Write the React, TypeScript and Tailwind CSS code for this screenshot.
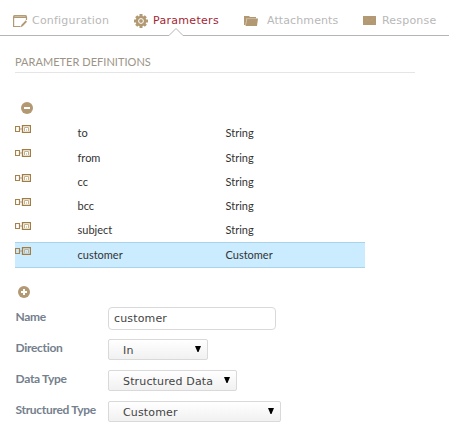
import React from "react";

const verdana = "font-['DejaVu_Sans',sans-serif]";

function ConfigIcon() {
  return (
    <svg width="15" height="13" viewBox="0 0 15 13" fill="none" className="block">
      <path d="M0 1.5Q0 0 1.5 0H12.5Q14 0 14 1.5V3H0Z" fill="#b29973" />
      <path d="M1.5 1.4H12.5" stroke="#d8cbb6" strokeWidth=".8" />
      <path d="M.6 2V11.5H7.5M13.5 2V5" stroke="#b29973" strokeWidth="1.2" />
      <path d="M7.5 12.2L8.5 9.7L12.8 5.3L14 6.7L9.7 11.2Z" fill="#b29973" />
    </svg>
  );
}

function GearIcon() {
  return (
    <svg width="14" height="14" viewBox="-7 -7 14 14" className="block">
      <g fill="#b29973">
        <circle r="5.3" />
        <rect x="-1.5" y="-7" width="3" height="14" />
        <rect x="-7" y="-1.5" width="14" height="3" />
        <rect x="-1.5" y="-6.8" width="3" height="13.6" transform="rotate(45)" />
        <rect x="-1.5" y="-6.8" width="3" height="13.6" transform="rotate(-45)" />
      </g>
      <circle r="2.4" fill="none" stroke="#fff" strokeWidth="1" />
    </svg>
  );
}

function FolderIcon() {
  return (
    <svg width="14" height="10" viewBox="0 0 14 10" className="block">
      <path d="M0 0H5L6 1H12V2.5H2.5L1.5 9H0Z" fill="#b29973" />
      <path d="M3 2.6H14L13 10H1.5Z" fill="#b29973" />
      <path d="M2 8L2.8 2.7H12" fill="none" stroke="#cdbb9f" strokeWidth=".6" />
    </svg>
  );
}

function MailIcon() {
  return (
    <svg width="13" height="9" viewBox="0 0 13 9" className="block">
      <rect width="13" height="9" fill="#b29973" />
      <path d="M.5 .5L6.5 5L12.5 .5M.5 8.5L4.5 4M12.5 8.5L8.5 4" fill="none" stroke="#bfa98a" strokeWidth=".4" />
    </svg>
  );
}

function ParamIcon() {
  return (
    <svg width="16" height="8" viewBox="0 0 16 8" fill="none" className="block">
      <path d="M.5 1.5H4.5V6.5H.5Z" stroke="#a5834d" strokeWidth="1.2" />
      <path d="M5 4H7" stroke="#b79f78" strokeWidth="1.2" />
      <path d="M7.5 .5H15.5V7.5H7.5Z" stroke="#a17d43" strokeWidth="1.3" />
      <path d="M9.5 6V2.5H13.5V6" stroke="#c6b18e" />
      <path d="M11.5 4V6" stroke="#dccfb8" />
    </svg>
  );
}

function RoundButton({ plus = false }: { plus?: boolean }) {
  return (
    <svg width="12" height="12" viewBox="0 0 12 12" className="block">
      <circle cx="6" cy="6" r="6" fill="#b29973" />
      <path d={plus ? "M3 6H9M6 3V9" : "M3 6H9"} stroke="#fff" strokeWidth="2" />
    </svg>
  );
}

const rows = [
  { name: "to", type: "String", cls: "h-[25px] leading-[26px]", icon: "mt-[5px]" },
  { name: "from", type: "String", cls: "h-6 leading-[26px]", icon: "mt-1" },
  { name: "cc", type: "String", cls: "h-6 leading-[26px]", icon: "mt-[5px]" },
  { name: "bcc", type: "String", cls: "h-6 leading-[26px]", icon: "mt-[5px]" },
  { name: "subject", type: "String", cls: "h-[25px] leading-[26px]", icon: "mt-[5px]" },
  { name: "customer", type: "Customer", cls: "h-[26px] bg-[#cbebff] border-y border-[#a9d3e8] leading-6", icon: "mt-1" },
];

function Select({ value, width }: { value: string; width: string }) {
  return (
    <div className={`flex h-[21px] items-center justify-between rounded-[2px] border border-[#d9d9d9] bg-gradient-to-b from-white to-[#f1f1f1] pl-[14px] pr-[6px] ${width}`}>
      <span className={`${verdana} whitespace-nowrap pt-[2px] text-[11px] leading-[18px] tracking-[0.15px] text-[#444]`}>{value}</span>
      <svg width="6" height="6" viewBox="0 0 6 6" className="mb-[2px] block">
        <path d="M0 0H6L3.5 6H2.5Z" fill="#000" />
      </svg>
    </div>
  );
}

function Field({ label, children }: { label: string; children: React.ReactNode }) {
  return (
    <div className="flex h-[31px] items-center">
      <label className="w-[92px] whitespace-nowrap pb-[3px] pl-[0.5px] text-[12px] font-bold leading-4 tracking-[-0.3px] text-[#757f8d]">{label}</label>
      {children}
    </div>
  );
}

export default function App() {
  return (
    <div className="h-[448px] w-[449px] overflow-hidden bg-white font-['Lato',sans-serif]">
      <nav className={`relative flex h-9 border-b border-[#b5b5b5] pl-[13px] pt-[13px] text-[11px] leading-[16px] tracking-[0.2px] text-[#b8b8b8] ${verdana}`}>
        <div className="flex w-[121px] gap-1"><span className="w-[15px] pt-[2px]"><ConfigIcon /></span><span>Configuration</span></div>
        <div className="flex w-[110px] gap-[5px] tracking-[0.3px] text-[#a31f34]"><span className="w-[14px] pt-[1px]"><GearIcon /></span><span>Parameters</span></div>
        <div className="flex w-[119px] gap-[9px] tracking-[0.1px]"><span className="w-[14px] pt-[3px]"><FolderIcon /></span><span>Attachments</span></div>
        <div className="flex gap-[6px]"><span className="w-[13px] pt-[3px]"><MailIcon /></span><span>Response</span></div>
        <svg width="16" height="9" viewBox="0 0 16 9" className="absolute left-[168px] top-[27px]">
          <path d="M1 8.5L8 1.5L15 8.5V9H1Z" fill="#fff" />
          <path d="M0 8.5H1L8 1.5L15 8.5H16" fill="none" stroke="#b5b5b5" />
        </svg>
      </nav>
      <main className="pl-[15px]">
        <h1 className="flex h-[37px] w-[400px] items-end border-b border-[#e5e5e5] pb-[2px] text-[11px] leading-4 tracking-[0.03px] text-[#9c9486]">PARAMETER DEFINITIONS</h1>
        <div className="pl-[6px] pt-[29px]"><RoundButton /></div>
        <div className="mt-[6px] w-[350px] text-[11px] text-[#333]">
          {rows.map((r) => (
            <div key={r.name} className={`flex ${r.cls}`}>
              <span className={`w-[62.5px] ${r.icon}`}><ParamIcon /></span>
              <span className="w-[148px]">{r.name}</span>
              <span>{r.type}</span>
            </div>
          ))}
        </div>
        <div className="pl-[3px] pt-[18px]"><RoundButton plus /></div>
        <form className="mt-[5px]">
          <Field label="Name">
            <input readOnly value="customer" className={`${verdana} ml-px h-[23px] w-[168px] rounded-[4px] border border-[#d9d9d9] px-[5px] text-[11px] tracking-[0.15px] text-[#444] outline-none`} />
          </Field>
          <Field label="Direction"><div className="pl-px"><Select value="In" width="w-[100px]" /></div></Field>
          <Field label="Data Type"><div className="pl-px"><Select value="Structured Data" width="w-[129px]" /></div></Field>
          <Field label="Structured Type"><div className="pl-px"><Select value="Customer" width="w-[173px]" /></div></Field>
        </form>
      </main>
    </div>
  );
}
